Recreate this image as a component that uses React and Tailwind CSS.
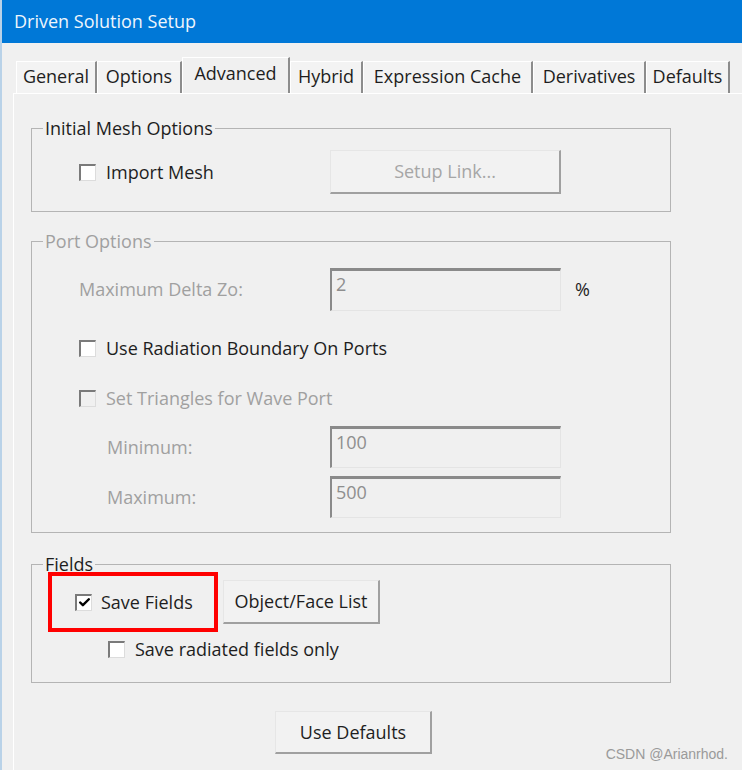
import { Check } from 'lucide-react'

const font = { fontFamily: '"Open Sans", "Noto Sans", sans-serif' }

function Box({ checked = false, disabled = false }) {
  return (
    <span
      className={`flex h-[17px] w-[17px] shrink-0 items-center justify-center border-t-2 border-l-2 border-r border-b border-t-[#7a7a7a] border-l-[#7a7a7a] border-r-[#dcdcdc] border-b-[#dcdcdc] ${
        disabled ? 'bg-[#f0f0f0]' : 'bg-white'
      }`}
    >
      {checked && <Check className="h-[13px] w-[13px] text-black" strokeWidth={4.5} />}
    </span>
  )
}

function Button({ children, disabled = false, className = '' }) {
  return (
    <div
      className={`flex items-center justify-center border-t border-l border-r-2 border-b-2 border-t-[#e6e6e6] border-l-[#e6e6e6] border-r-[#a0a0a0] border-b-[#a0a0a0] bg-[#f2f2f2] text-[18px] font-medium ${
        disabled ? 'text-[#a6a6a6]' : 'text-[#1e1e1e]'
      } ${className}`}
    >
      {children}
    </div>
  )
}

function Field({ value }) {
  return (
    <div className="h-full w-[231px] border-t-[3px] border-l-2 border-r border-b border-t-[#8a8a8a] border-l-[#8a8a8a] border-r-[#e4e4e4] border-b-[#e4e4e4] bg-[#f0f0f0] pl-[4px] pt-[1px] text-[18px] font-medium leading-[24px] text-[#8e8e8e]">
      {value}
    </div>
  )
}

function Group({ title, disabled = false, children, className = '' }) {
  return (
    <fieldset className={`w-[640px] border border-[#b4b4b4] ${className}`}>
      <legend
        className={`ml-[11px] px-[2px] text-[18px] font-medium leading-[24px] ${
          disabled ? 'text-[#a0a0a0]' : 'text-[#1e1e1e]'
        }`}
      >
        {title}
      </legend>
      {children}
    </fieldset>
  )
}

const tabs = [
  { name: 'General', w: 'w-[81px]' },
  { name: 'Options', w: 'w-[85px]' },
  { name: 'Advanced', w: 'w-[108px]', active: true },
  { name: 'Hybrid', w: 'w-[73px]' },
  { name: 'Expression Cache', w: 'w-[170px]' },
  { name: 'Derivatives', w: 'w-[113px]' },
  { name: 'Defaults', w: 'w-[84px]' },
]

export default function App() {
  return (
    <div
      className="relative h-[770px] w-[742px] overflow-hidden border-l-2 border-[#b9d2e8] bg-[#f0f0f0]"
      style={font}
    >
      {/* title bar */}
      <div className="flex h-[43px] items-center bg-[#0078d7] pl-[12px] text-[18px] text-[#eef5fc]">
        Driven Solution Setup
      </div>

      {/* tabs */}
      <div className="ml-[14px] mt-[14px] flex h-[36px] items-end">
        {tabs.map((t) =>
          t.active ? (
            <div
              key={t.name}
              className={`${t.w} flex h-[36px] items-start justify-center border-t border-l border-r-2 border-t-white border-l-white border-r-[#8c8c8c] bg-[#f0f0f0] pt-[2px] text-[18px] font-medium text-[#1e1e1e]`}
            >
              {t.name}
            </div>
          ) : (
            <div
              key={t.name}
              className={`${t.w} flex h-[32px] items-center justify-center border-t border-l border-r-2 border-t-white border-l-white border-r-[#8c8c8c] bg-[#f3f3f3] pb-[2px] text-[18px] font-medium text-[#1e1e1e]`}
            >
              {t.name}
            </div>
          )
        )}
      </div>

      {/* panel */}
      <div className="ml-[11px] h-[700px] border-t border-l border-white pl-[17px] pt-[22px]">
        <Group title="Initial Mesh Options">
          <div className="mb-[17px] mt-[10px] flex h-[44px] items-center pl-[47px]">
            <label className="flex w-[251px] items-center gap-[10px] text-[18px] font-medium text-[#1e1e1e]">
              <Box />
              Import Mesh
            </label>
            <Button disabled className="h-[44px] w-[231px]">
              Setup Link...
            </Button>
          </div>
        </Group>

        <Group title="Port Options" disabled className="mt-[17px]">
          <div className="mt-[15px] flex h-[43px] items-center pl-[47px]">
            <span className="w-[251px] text-[18px] font-medium text-[#a0a0a0]">Maximum Delta Zo:</span>
            <Field value="2" />
            <span className="ml-[14px] text-[18px] font-medium text-[#1e1e1e]">%</span>
          </div>
          <label className="mt-[17px] flex h-[40px] items-center gap-[10px] pl-[47px] text-[18px] font-medium text-[#1e1e1e]">
            <Box />
            Use Radiation Boundary On Ports
          </label>
          <label className="mt-[10px] flex h-[40px] items-center gap-[10px] pl-[47px] text-[18px] font-medium text-[#a0a0a0]">
            <Box disabled />
            Set Triangles for Wave Port
          </label>
          <div className="mt-[8px] flex h-[42px] items-center pl-[75px]">
            <span className="w-[223px] text-[18px] font-medium text-[#a0a0a0]">Minimum:</span>
            <Field value="100" />
          </div>
          <div className="mb-[14px] mt-[8px] flex h-[42px] items-center pl-[75px]">
            <span className="w-[223px] text-[18px] font-medium text-[#a0a0a0]">Maximum:</span>
            <Field value="500" />
          </div>
        </Group>

        <Group title="Fields" className="mt-[19px]">
          <div className="relative mt-[4px] flex h-[44px] items-center pl-[43px]">
            <label className="flex w-[148px] items-center gap-[9px] text-[18px] font-medium text-[#1e1e1e]">
              <Box checked />
              Save Fields
            </label>
            <Button className="h-[44px] w-[157px]">Object/Face List</Button>
            {/* annotation */}
            <div className="absolute left-[16px] top-[-8px] h-[60px] w-[170px] border-4 border-[#ff0000]" />
          </div>
          <label className="mb-[18px] mt-[10px] flex h-[30px] items-center gap-[10px] pl-[76px] text-[18px] font-medium text-[#1e1e1e]">
            <Box />
            Save radiated fields only
          </label>
        </Group>

        <Button className="ml-[244px] mt-[28px] h-[43px] w-[157px]">Use Defaults</Button>
      </div>

      <div
        className="absolute bottom-[5px] right-[14px] text-[14px] text-[#9a9a9a]"
        style={{ fontFamily: '"Liberation Sans", Arial, sans-serif' }}
      >
        CSDN @Arianrhod.
      </div>
    </div>
  )
}
